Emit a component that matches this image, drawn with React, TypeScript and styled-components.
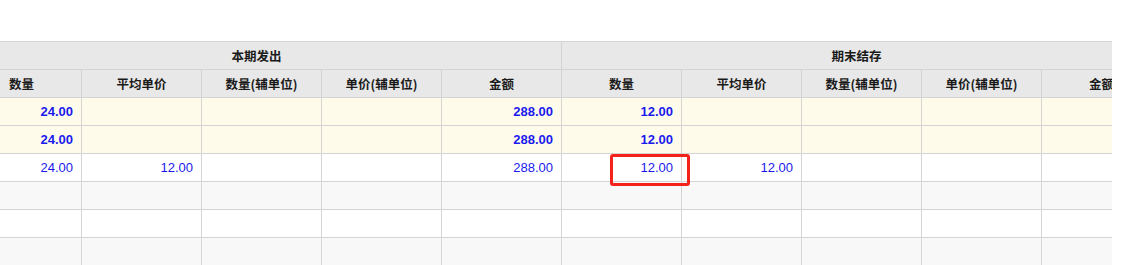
import styled, { createGlobalStyle } from "styled-components";

const GlobalStyle = createGlobalStyle`
  html, body {
    margin: 0;
    padding: 0;
    background: #ffffff;
  }
`;

const Page = styled.div`
  padding-top: 41px;
  background: #ffffff;
`;

const Viewport = styled.div`
  width: 1112px;
  height: 224px;
  overflow: hidden;
  border-top: 1px solid #d4d4d4;
  box-sizing: border-box;
`;

const Grid = styled.div`
  display: grid;
  grid-template-columns: repeat(10, 120px);
  grid-auto-rows: 28px;
  margin-left: -38px;
  width: 1200px;
`;

const HeadCell = styled.div<{ $span?: number }>`
  grid-column: span ${(p) => p.$span ?? 1};
  display: flex;
  align-items: center;
  justify-content: center;
  box-sizing: border-box;
  padding-right: ${(p) => (p.$span ? "10px" : "0")};
  background: #e8e8e8;
  border-right: 1px solid #d4d4d4;
  border-bottom: 1px solid #d4d4d4;
  font-family: "Noto Sans CJK SC", "Liberation Sans", sans-serif;
  font-size: 12.5px;
  font-weight: 700;
  color: #1a1a1a;
  white-space: nowrap;
`;

const Cell = styled.div<{ $tone: "total" | "white" | "gray"; $bold?: boolean }>`
  position: relative;
  display: flex;
  align-items: center;
  justify-content: flex-end;
  box-sizing: border-box;
  padding-right: 8px;
  background: ${(p) =>
    p.$tone === "total" ? "#fffbea" : p.$tone === "gray" ? "#f8f8f8" : "#ffffff"};
  border-right: 1px solid #d4d4d4;
  border-bottom: 1px solid #d4d4d4;
  font-family: "Liberation Sans", Arial, sans-serif;
  font-size: 13px;
  font-weight: ${(p) => (p.$bold ? 700 : 400)};
  color: #1a1aee;
`;

const Marker = styled.div`
  position: absolute;
  left: 48px;
  top: 0;
  width: 80px;
  height: 32px;
  box-sizing: border-box;
  border: 3px solid #f5221b;
  border-radius: 3px;
  pointer-events: none;
  z-index: 2;
`;

const subHeads = ["数量", "平均单价", "数量(辅单位)", "单价(辅单位)", "金额"];

type Row = { tone: "total" | "white" | "gray"; bold?: boolean; values: string[] };

const rows: Row[] = [
  { tone: "total", bold: true, values: ["24.00", "", "", "", "288.00", "12.00", "", "", "", ""] },
  { tone: "total", bold: true, values: ["24.00", "", "", "", "288.00", "12.00", "", "", "", ""] },
  { tone: "white", values: ["24.00", "12.00", "", "", "288.00", "12.00", "12.00", "", "", ""] },
  { tone: "gray", values: Array(10).fill("") },
  { tone: "white", values: Array(10).fill("") },
  { tone: "gray", values: Array(10).fill("") },
];

export default function App() {
  return (
    <>
      <GlobalStyle />
      <Page>
        <Viewport>
          <Grid>
            <HeadCell $span={5}>本期发出</HeadCell>
            <HeadCell $span={5}>期末结存</HeadCell>
            {[...subHeads, ...subHeads].map((h, i) => (
              <HeadCell key={i}>{h}</HeadCell>
            ))}
            {rows.map((r, ri) =>
              r.values.map((v, ci) => (
                <Cell key={`${ri}-${ci}`} $tone={r.tone} $bold={r.bold}>
                  {v}
                  {ri === 2 && ci === 5 && <Marker />}
                </Cell>
              ))
            )}
          </Grid>
        </Viewport>
      </Page>
    </>
  );
}
